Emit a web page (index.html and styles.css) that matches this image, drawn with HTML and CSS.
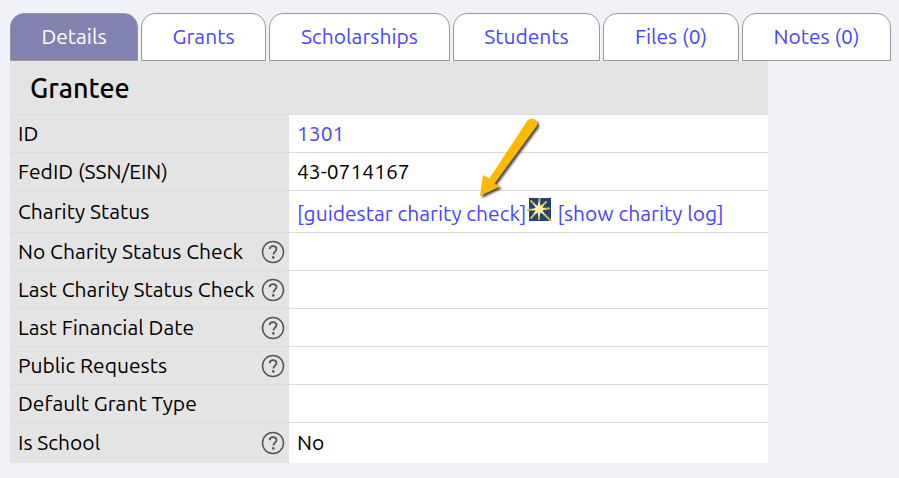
FILE: index.html
```html
<!DOCTYPE html>
<html lang="en">
<head>
    <meta charset="UTF-8">
    <meta name="viewport" content="width=device-width, initial-scale=1.0">
    <title>Grantee Details</title>
    <link rel="stylesheet" href="styles.css">
</head>
<body>
    <!-- Shared help icon -->
    <svg class="defs" width="0" height="0" aria-hidden="true">
        <symbol id="help" viewBox="0 0 24 24">
            <circle cx="12" cy="12" r="10.5" fill="none" stroke="#555" stroke-width="1.5"/>
            <path d="M8.6 9.2C8.8 7.2 10.2 6.2 12 6.2C14 6.2 15.5 7.3 15.5 9.2C15.5 11.7 12.4 11.7 12.4 14.6" fill="none" stroke="#555" stroke-width="1.8"/>
            <circle cx="12.3" cy="17.4" r="1.3" fill="#555"/>
        </symbol>
    </svg>

    <nav class="tabs">
        <a class="tab active" href="#details">Details</a>
        <a class="tab" href="#grants">Grants</a>
        <a class="tab" href="#scholarships">Scholarships</a>
        <a class="tab" href="#students">Students</a>
        <a class="tab" href="#files">Files (0)</a>
        <a class="tab" href="#notes">Notes (0)</a>
    </nav>

    <table class="details" id="details">
        <thead>
            <tr>
                <th class="heading" colspan="2">Grantee</th>
            </tr>
        </thead>
        <tbody>
            <tr>
                <th scope="row">ID</th>
                <td><a href="#1301">1301</a></td>
            </tr>
            <tr>
                <th scope="row">FedID (SSN/EIN)</th>
                <td>43-0714167</td>
            </tr>
            <tr class="charity">
                <th scope="row">Charity Status</th>
                <td>
                    <div class="charity-links">
                        <a class="check" href="#check">[guidestar charity check]<svg class="arrow" width="66" height="88" viewBox="0 0 66 88" aria-hidden="true">
                                <path d="M50.5 6.5A5.5 5.5 0 0 1 60 11.5L17.5 69.5L23 72.5L3 82L6 61L12 65Z" fill="#fbb900"/>
                            </svg></a>
                        <svg class="star" width="24" height="24" viewBox="0 0 24 24" role="img" aria-label="GuideStar">
                            <rect x="2" y="0" width="22" height="23" fill="#1e467d"/>
                            <g stroke="#e0b43c" stroke-width="2" stroke-linecap="round">
                                <path d="M12 11L12.5 1"/>
                                <path d="M12 11L19 4"/>
                                <path d="M12 11L22 10.5"/>
                                <path d="M12 11L23 22"/>
                                <path d="M12 11L12 21"/>
                                <path d="M12 11L4 20"/>
                                <path d="M12 11L1 12"/>
                                <path d="M12 11L4 3"/>
                            </g>
                            <path d="M12 3L13.5 8L17 6L15.5 10L20 11L15.5 12.5L18 17L13.5 14.5L12 19L10.5 14.5L6 17L8.5 12.5L4 11.5L8.5 10L6.5 5.5L10.5 8Z" fill="#fff0ae"/>
                        </svg>
                        <a class="log" href="#log">[show charity log]</a>
                    </div>
                </td>
            </tr>
            <tr>
                <th scope="row"><div class="label">No Charity Status Check<svg class="help"><use href="#help"/></svg></div></th>
                <td></td>
            </tr>
            <tr>
                <th scope="row"><div class="label">Last Charity Status Check<svg class="help"><use href="#help"/></svg></div></th>
                <td></td>
            </tr>
            <tr>
                <th scope="row"><div class="label">Last Financial Date<svg class="help"><use href="#help"/></svg></div></th>
                <td></td>
            </tr>
            <tr>
                <th scope="row"><div class="label">Public Requests<svg class="help"><use href="#help"/></svg></div></th>
                <td></td>
            </tr>
            <tr>
                <th scope="row">Default Grant Type</th>
                <td></td>
            </tr>
            <tr class="last">
                <th scope="row"><div class="label">Is School<svg class="help"><use href="#help"/></svg></div></th>
                <td>No</td>
            </tr>
        </tbody>
    </table>
</body>
</html>
```
FILE: styles.css
```css
* {
    box-sizing: border-box;
}

body {
    margin: 0;
    padding: 13px 8px 15px 10px;
    background: #f1f2f8;
    color: #000;
    font-family: Ubuntu, "Open Sans", "Noto Sans", sans-serif;
    font-size: 21px;
    line-height: 26px;
}

a {
    color: #4646ff;
    text-decoration: none;
}

.defs {
    position: absolute;
}

.tabs {
    display: grid;
    grid-template-columns: 128fr 125fr 181fr 147fr 136fr 149fr;
    gap: 3px;
}

.tab {
    padding: 9px 0 11px;
    border: 1px solid #999;
    border-radius: 14px 14px 0 0;
    background: #fff;
    text-align: center;
    white-space: nowrap;
}

.tab.active {
    background: #8282b0;
    color: #fff;
}

.details {
    width: 86%;
    border-collapse: separate;
    border-spacing: 0;
}

.details th,
.details td {
    height: 38px;
    padding: 0 8px 2px;
    border-bottom: 1px solid #dcdcdc;
    text-align: left;
    font-weight: 400;
}

.details th {
    width: 279px;
    padding-right: 4px;
    background: #e4e4e4;
    white-space: nowrap;
}

.details td {
    background: #fff;
}

.details .heading {
    height: 54px;
    padding: 0 20px;
    font-size: 27px;
    font-weight: 500;
}

.details .charity th,
.details .charity td {
    height: 42px;
}

.details .last th,
.details .last td {
    height: 40px;
    border-bottom: 0;
}

.label {
    display: flex;
    align-items: center;
    justify-content: space-between;
}

.help {
    flex: none;
    width: 24px;
    height: 24px;
    margin-bottom: -2px;
}

.charity-links {
    display: flex;
    align-items: center;
    padding-top: 4px;
}

.check {
    position: relative;
}

.arrow {
    position: absolute;
    right: -17px;
    bottom: 24px;
    filter: drop-shadow(2px 2px 1px rgba(0, 0, 0, 0.7));
}

.star {
    align-self: flex-start;
    margin: -2px 0 0 1px;
}

.log {
    margin-left: 6px;
}
```
